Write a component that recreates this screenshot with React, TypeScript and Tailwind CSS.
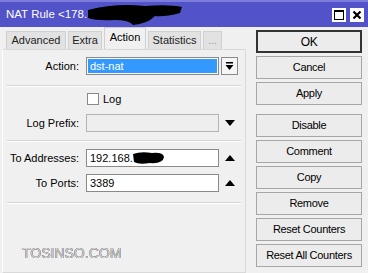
import React from 'react';

const tabs = [
  { name: 'Advanced', w: 'w-[60px]' },
  { name: 'Extra', w: 'w-[34px]' },
  { name: 'Action', w: 'w-[42px]', active: true },
  { name: 'Statistics', w: 'w-[53px]' },
  { name: '...', w: 'w-[19px]' },
];

const buttons = ['OK', 'Cancel', 'Apply', 'Disable', 'Comment', 'Copy', 'Remove', 'Reset Counters', 'Reset All Counters'];

const Triangle = ({ up }: { up?: boolean }) => (
  <svg width="10" height="6" viewBox="0 0 10 6" className="ml-[6px]">
    {up ? <path d="M0 6 L5 0 L10 6 Z" fill="#000" /> : <path d="M0 0 L10 0 L5 6 Z" fill="#000" />}
  </svg>
);

const Separator = () => (
  <div className="mx-[4px] border-t border-[#d5d5d5] border-b border-b-white" />
);

const Row = ({ label, children, className = '' }: { label: string; children: React.ReactNode; className?: string }) => (
  <div className={`flex items-center ${className}`}>
    <div className="w-[77px] text-right pr-[1px]">{label}</div>
    <div className="ml-[6px] flex items-center">{children}</div>
  </div>
);

export default function App() {
  return (
    <div
      className="w-[368px] h-[273px] overflow-hidden bg-[#f0f0f0] text-[11px] text-black"
      style={{ fontFamily: '"Liberation Sans", Arial, sans-serif' }}
    >
      {/* title bar */}
      <div className="h-[27px] bg-[#5252c9] border-t-2 border-[#7c7cdc] flex items-center relative">
        <span className="ml-[6px] text-white text-[11.5px]">NAT Rule &lt;178.</span>
        <svg className="absolute left-[87px] top-[1px]" width="96" height="23" viewBox="0 0 96 23">
          <path d="M1 7 Q28 0 58 3 Q82 1 95 4 L93 10 Q78 14 68 13 Q60 21 46 22 Q42 17 28 17 Q10 18 1 15 Z" fill="#000" />
        </svg>
        <div className="ml-auto mr-[4px] flex gap-[4px]">
          <div className="w-[14px] h-[14px] bg-white flex items-center justify-center">
            <div className="w-[10px] h-[10px] border border-black border-t-2" />
          </div>
          <div className="w-[14px] h-[14px] bg-white flex items-center justify-center">
            <svg width="10" height="10" viewBox="0 0 10 10">
              <path d="M1.5 1.5 L8.5 8.5 M8.5 1.5 L1.5 8.5" stroke="#000" strokeWidth="2.2" />
            </svg>
          </div>
        </div>
      </div>

      <div className="flex">
        {/* left panel */}
        <div className="w-[250px] flex flex-col">
          <div className="h-[22px] flex items-end pl-[6px] gap-[2px]">
            {tabs.map(t => (
              <div
                key={t.name}
                className={`${t.w} flex items-center justify-center border border-b-0 ${
                  t.active
                    ? 'h-[22px] bg-[#f0f0f0] border-[#d0d0d0] pb-[3px]'
                    : 'h-[18px] bg-[#e2e2e2] border-[#d0d0d0] text-[#222]'
                } ${t.name === '...' ? 'text-[#999]' : ''}`}
              >
                {t.name}
              </div>
            ))}
          </div>
          <div className="h-[224px] ml-[2px] mr-[4px] border border-[#d9d9d9] border-l-white bg-[#f0f0f0] pt-[7px]">
            <Row label="Action:">
              <div className="w-[133px] h-[18px] border border-[#8a8a8a] bg-white p-[1px]">
                <div className="h-full bg-[#3399ff] text-white pl-[2px] leading-[14px]">dst-nat</div>
              </div>
              <div className="ml-[2px] w-[17px] h-[18px] border border-[#8a8a8a] bg-[#f5f5f5] flex items-center justify-center">
                <svg width="9" height="9" viewBox="0 0 9 9">
                  <rect x="1" y="0" width="7" height="1.5" fill="#000" />
                  <path d="M0.5 3 L8.5 3 L4.5 8 Z" fill="#000" />
                </svg>
              </div>
            </Row>
            <div className="mt-[10px]">
              <Separator />
            </div>
            <div className="mt-[6px] flex items-center pl-[84px] h-[12px]">
              <div className="w-[12px] h-[12px] border border-[#8a8a8a] bg-white" />
              <span className="ml-[4px]">Log</span>
            </div>
            <Row label="Log Prefix:" className="mt-[9px]">
              <div className="w-[133px] h-[18px] border border-[#b5b5b5] bg-[#eeeeee]" />
              <Triangle />
            </Row>
            <div className="mt-[8px]">
              <Separator />
            </div>
            <Row label="To Addresses:" className="mt-[7px]">
              <div className="w-[133px] h-[18px] border border-[#8a8a8a] bg-white pl-[3px] flex items-center relative">
                192.168.
                <svg className="absolute left-[44px] top-[1px]" width="34" height="14" viewBox="0 0 34 14">
                  <path d="M2 3 Q10 0 21 2 Q32 1 33 6 Q32 13 19 12 Q8 14 3 11 Z" fill="#000" />
                </svg>
              </div>
              <Triangle up />
            </Row>
            <Row label="To Ports:" className="mt-[7px]">
              <div className="w-[133px] h-[18px] border border-[#8a8a8a] bg-white pl-[3px] flex items-center">3389</div>
              <Triangle up />
            </Row>
            <div className="mt-[10px]">
              <Separator />
            </div>
            <div
              className="mt-[39px] ml-[19px] text-[14px] text-[#d4d4d4]"
              style={{ textShadow: '0 0 0.6px #333, 0 0 0.6px #333' }}
            >
              TOSINSO.COM
            </div>
          </div>
        </div>

        {/* right buttons */}
        <div className="flex flex-col gap-[3px] pt-[3px] pl-[6px]">
          {buttons.map(b => (
            <div
              key={b}
              className={`w-[106px] h-[23px] flex items-center justify-center tracking-[-0.3px] bg-[#ececec] ${
                b === 'OK' ? 'border-2 border-[#333] text-[12px]' : 'border border-[#a6a6a6]'
              } ${b === 'Disable' ? 'mt-[6px]' : ''}`}
            >
              {b}
            </div>
          ))}
        </div>
      </div>
    </div>
  );
}
